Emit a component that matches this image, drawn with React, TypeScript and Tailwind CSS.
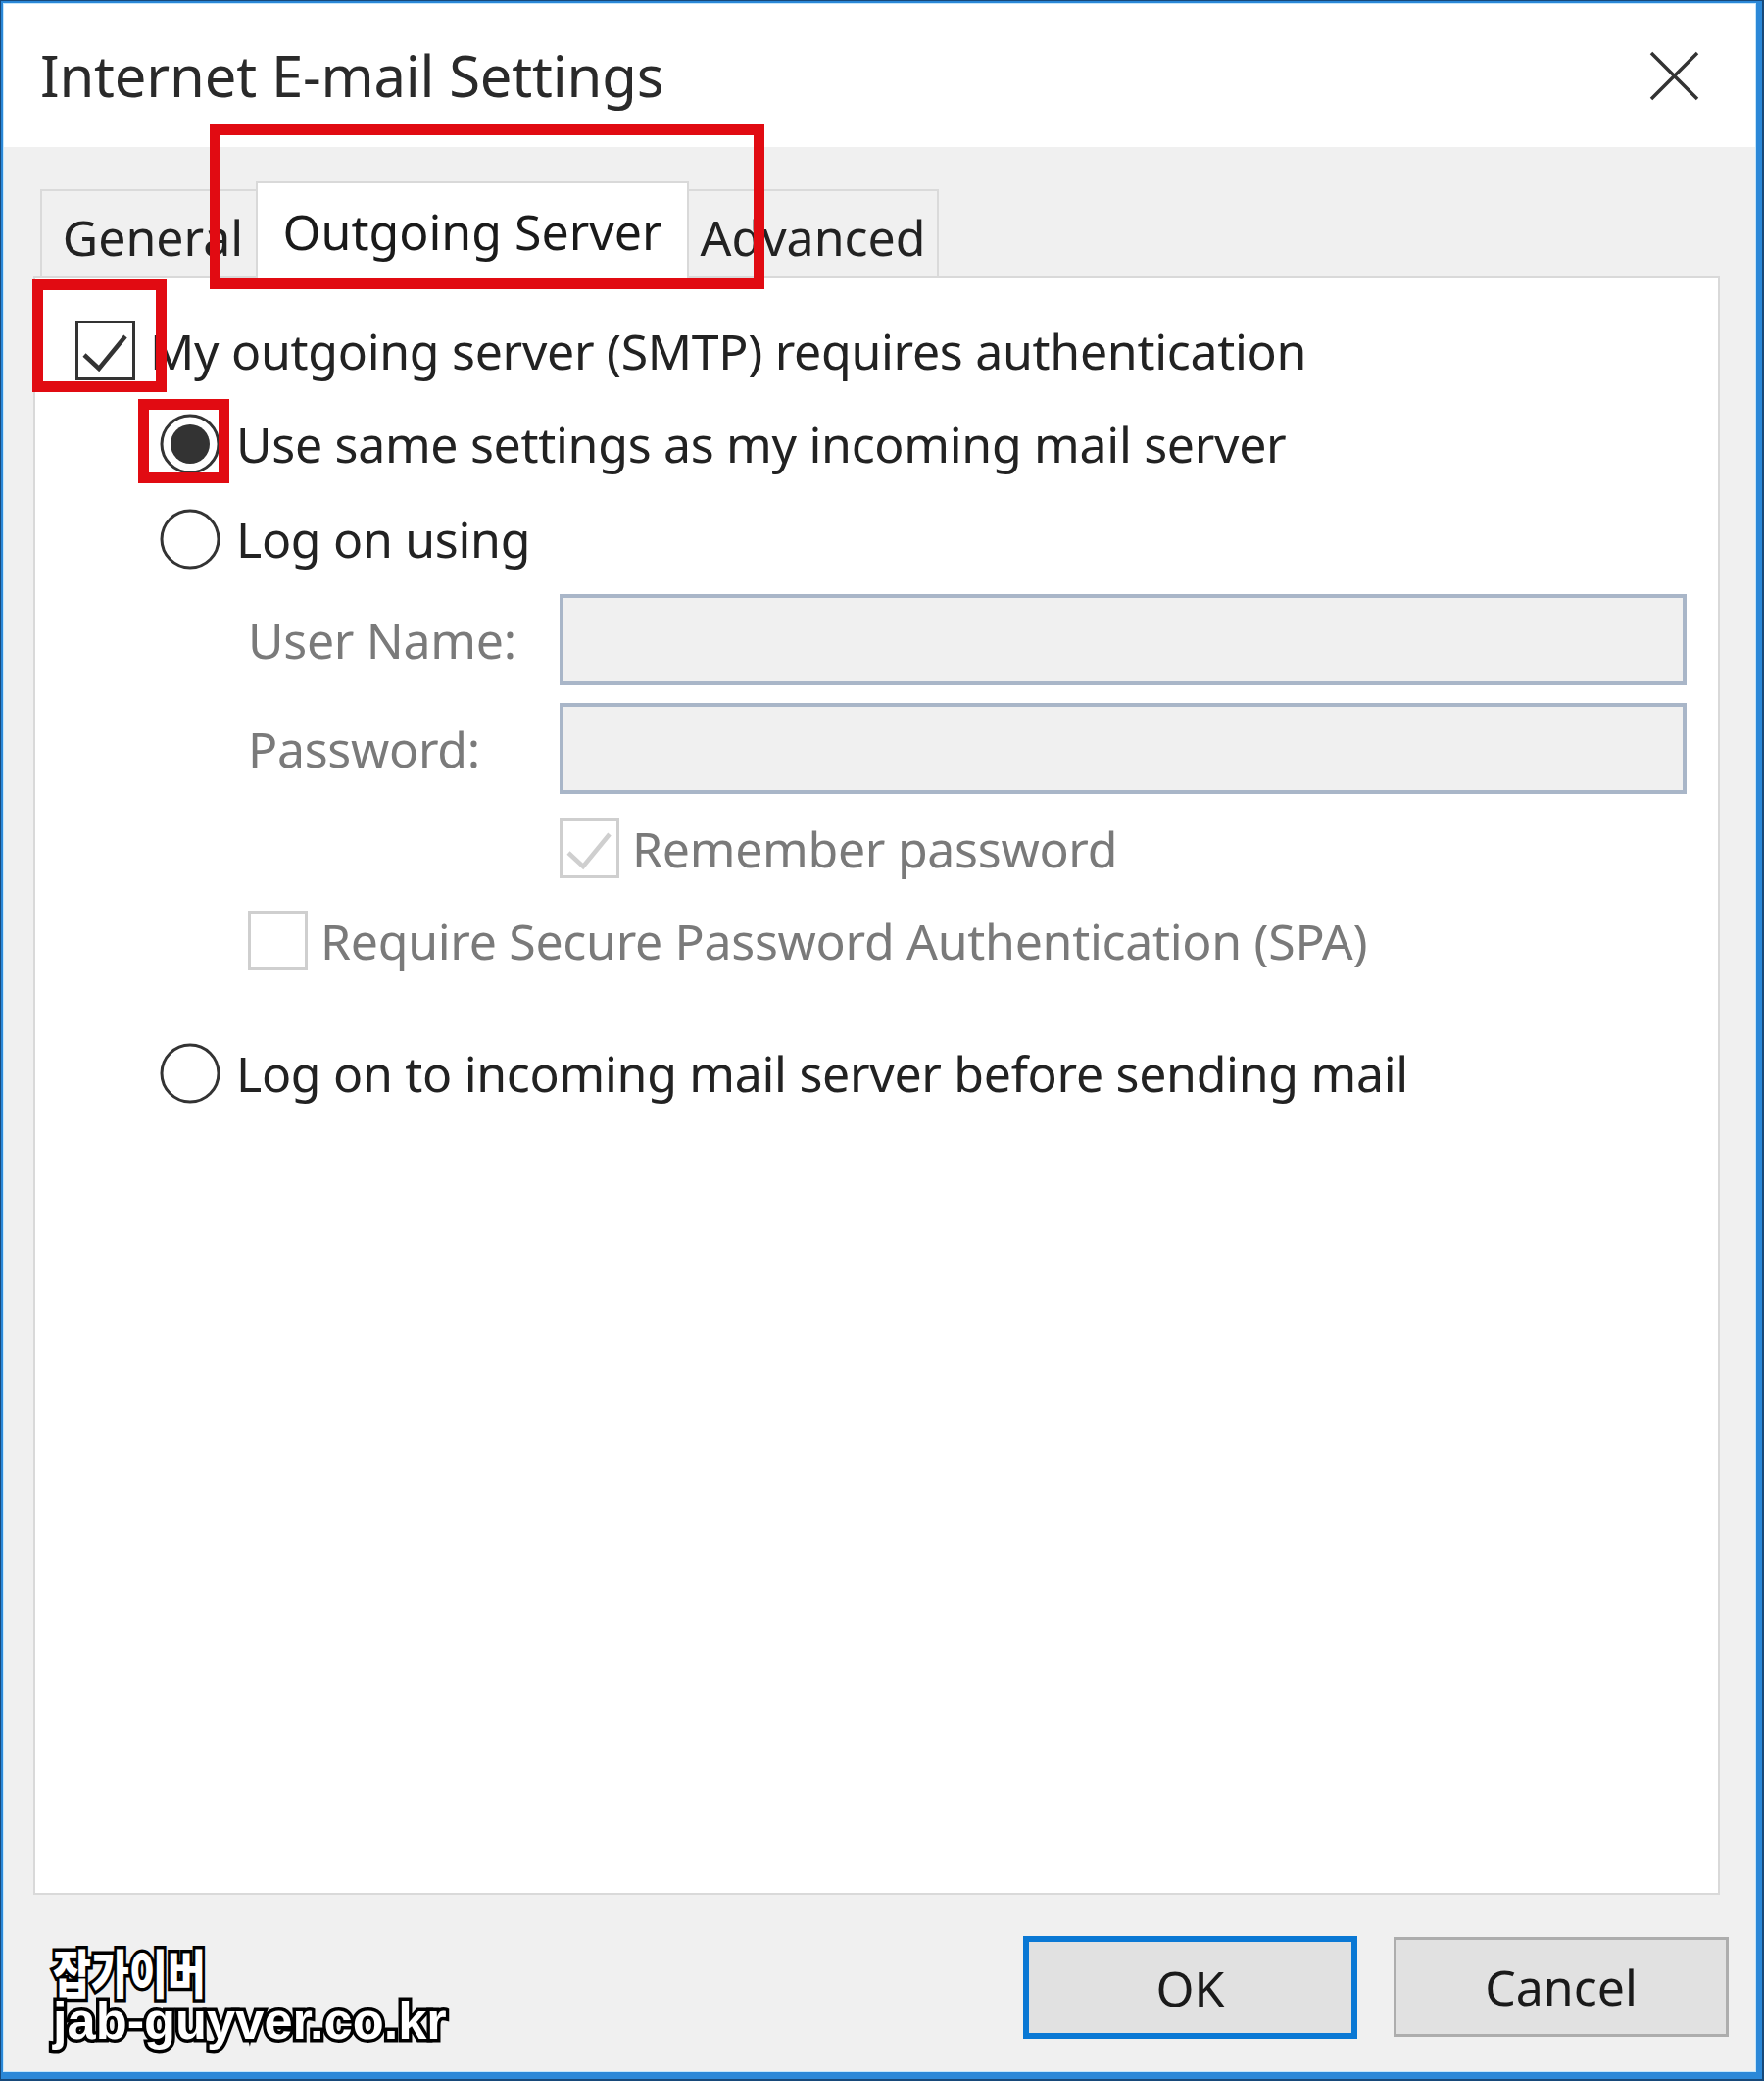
import type { ReactNode } from 'react';

function CheckBox({ checked, disabled }: { checked?: boolean; disabled?: boolean }) {
  const stroke = disabled ? '#cfcfcf' : '#333333';
  return (
    <svg width="61" height="61" viewBox="0 0 61 61" className="shrink-0">
      <rect x="1.5" y="1.5" width="58" height="58" fill="#ffffff" stroke={stroke} strokeWidth="3" />
      {checked && <polyline points="9,35 24,49 51,16" fill="none" stroke={stroke} strokeWidth="4.5" />}
    </svg>
  );
}

function Radio({ selected }: { selected?: boolean }) {
  return (
    <svg width="62" height="62" viewBox="0 0 62 62" className="shrink-0">
      <circle cx="31" cy="31" r="29" fill="#ffffff" stroke="#333333" strokeWidth="3" />
      {selected && <circle cx="31" cy="31" r="20" fill="#333333" />}
    </svg>
  );
}

function Tab({ label, active, className }: { label: string; active?: boolean; className: string }) {
  return (
    <div
      className={`flex items-center justify-center border-2 border-b-0 ${
        active ? 'relative z-10 -mb-[2px] bg-white border-[#d9d9d9] text-[#1a1a1a]' : 'bg-[#f0f0f0] border-[#dadada] text-[#222]'
      } ${className}`}
    >
      {label}
    </div>
  );
}

function Field({ label }: { label: string }) {
  return (
    <div className="flex items-center">
      <span className="w-[318px] shrink-0 text-[#7a7a7a]">{label}</span>
      <div className="h-[93px] flex-1 border-4 border-[#a9b6c8] bg-[#f0f0f0]" />
    </div>
  );
}

function Row({ children, className }: { children: ReactNode; className: string }) {
  return <div className={`flex items-center ${className}`}>{children}</div>;
}

export default function App() {
  return (
    <div className="w-[1800px] h-[2123px] bg-[#17497a] pt-px pl-px pr-[2px] pb-[2px]">
      <div className="h-full bg-[#2b88d8] pt-[2px] pl-[2px] pr-[6px] pb-[7px]">
        <div className="h-full bg-[#c4e6fb] p-px">
          <div className="relative h-full flex flex-col bg-[#f0f0f0] font-['Noto_Sans',sans-serif] text-[50px] leading-none text-[#222]">
            {/* title bar */}
            <div className="h-[146px] shrink-0 bg-white flex items-center justify-between pl-[37px] pr-[57px]">
              <span className="text-[58px] tracking-[-0.2px] text-[#2a2a2a]">Internet E-mail Settings</span>
              <svg width="51" height="51" viewBox="0 0 51 51">
                <path d="M2 2 L49 49 M49 2 L2 49" stroke="#333" strokeWidth="3.5" />
              </svg>
            </div>

            {/* tabs */}
            <div className="h-[132px] shrink-0 flex items-end pl-[37px]">
              <Tab label="General" className="w-[222px] h-[89px] pt-[6px] pl-[8px]" />
              <Tab label="Outgoing Server" active className="w-[442px] h-[99px] -mx-[2px]" />
              <Tab label="Advanced" className="w-[257px] h-[89px] pt-[6px]" />
            </div>

            {/* page */}
            <div className="h-[1651px] shrink-0 ml-[30px] mr-[36px] bg-white border-2 border-[#d9d9d9] pt-[43px] pl-[41px] pr-[32px] tracking-[-0.3px]">
              <Row className="gap-[15px]">
                <CheckBox checked />
                <span>My outgoing server (SMTP) requires authentication</span>
              </Row>
              <div className="pl-[86px]">
                <Row className="mt-[34px] gap-[16px]">
                  <Radio selected />
                  <span>Use same settings as my incoming mail server</span>
                </Row>
                <Row className="mt-[35px] gap-[16px]">
                  <Radio />
                  <span>Log on using</span>
                </Row>
                <div className="pl-[90px]">
                  <div className="mt-[25px]">
                    <Field label="User Name:" />
                  </div>
                  <div className="mt-[18px]">
                    <Field label="Password:" />
                  </div>
                  <Row className="mt-[25px] pl-[318px] gap-[13px] text-[#7a7a7a]">
                    <CheckBox checked disabled />
                    <span>Remember password</span>
                  </Row>
                  <Row className="mt-[33px] gap-[13px] text-[#7a7a7a]">
                    <CheckBox disabled />
                    <span>Require Secure Password Authentication (SPA)</span>
                  </Row>
                </div>
                <Row className="mt-[74px] gap-[16px]">
                  <Radio />
                  <span>Log on to incoming mail server before sending mail</span>
                </Row>
              </div>
            </div>

            {/* buttons */}
            <div className="flex justify-end gap-[37px] pt-[42px] pr-[27px]">
              <button className="w-[341px] h-[105px] bg-[#e1e1e1] border-[6px] border-[#0a78d4] text-[#1a1a1a]">OK</button>
              <button className="w-[342px] h-[102px] mt-px bg-[#e1e1e1] border-[3px] border-[#adadad] text-[#1a1a1a]">Cancel</button>
            </div>

            {/* red highlight boxes */}
            <div className="absolute left-[210px] top-[123px] w-[566px] h-[168px] border-[11px] border-[#e10b12]" />
            <div className="absolute left-[29px] top-[281px] w-[137px] h-[115px] border-[11px] border-[#e10b12]" />
            <div className="absolute left-[137px] top-[403px] w-[93px] h-[86px] border-[11px] border-[#e10b12]" />

            {/* watermark */}
            <div className="absolute left-[50px] top-[1982px] font-black text-white [-webkit-text-stroke:7px_black] [paint-order:stroke_fill]">
              <div className="origin-left scale-x-[0.8] text-[53px] leading-[50px] font-['Noto_Sans_CJK_KR',sans-serif]">잡가이버</div>
              <div className="origin-left scale-x-[0.97] text-[54px] leading-[50px] font-['Liberation_Sans',sans-serif] font-bold">jab-guyver.co.kr</div>
            </div>
          </div>
        </div>
      </div>
    </div>
  );
}
